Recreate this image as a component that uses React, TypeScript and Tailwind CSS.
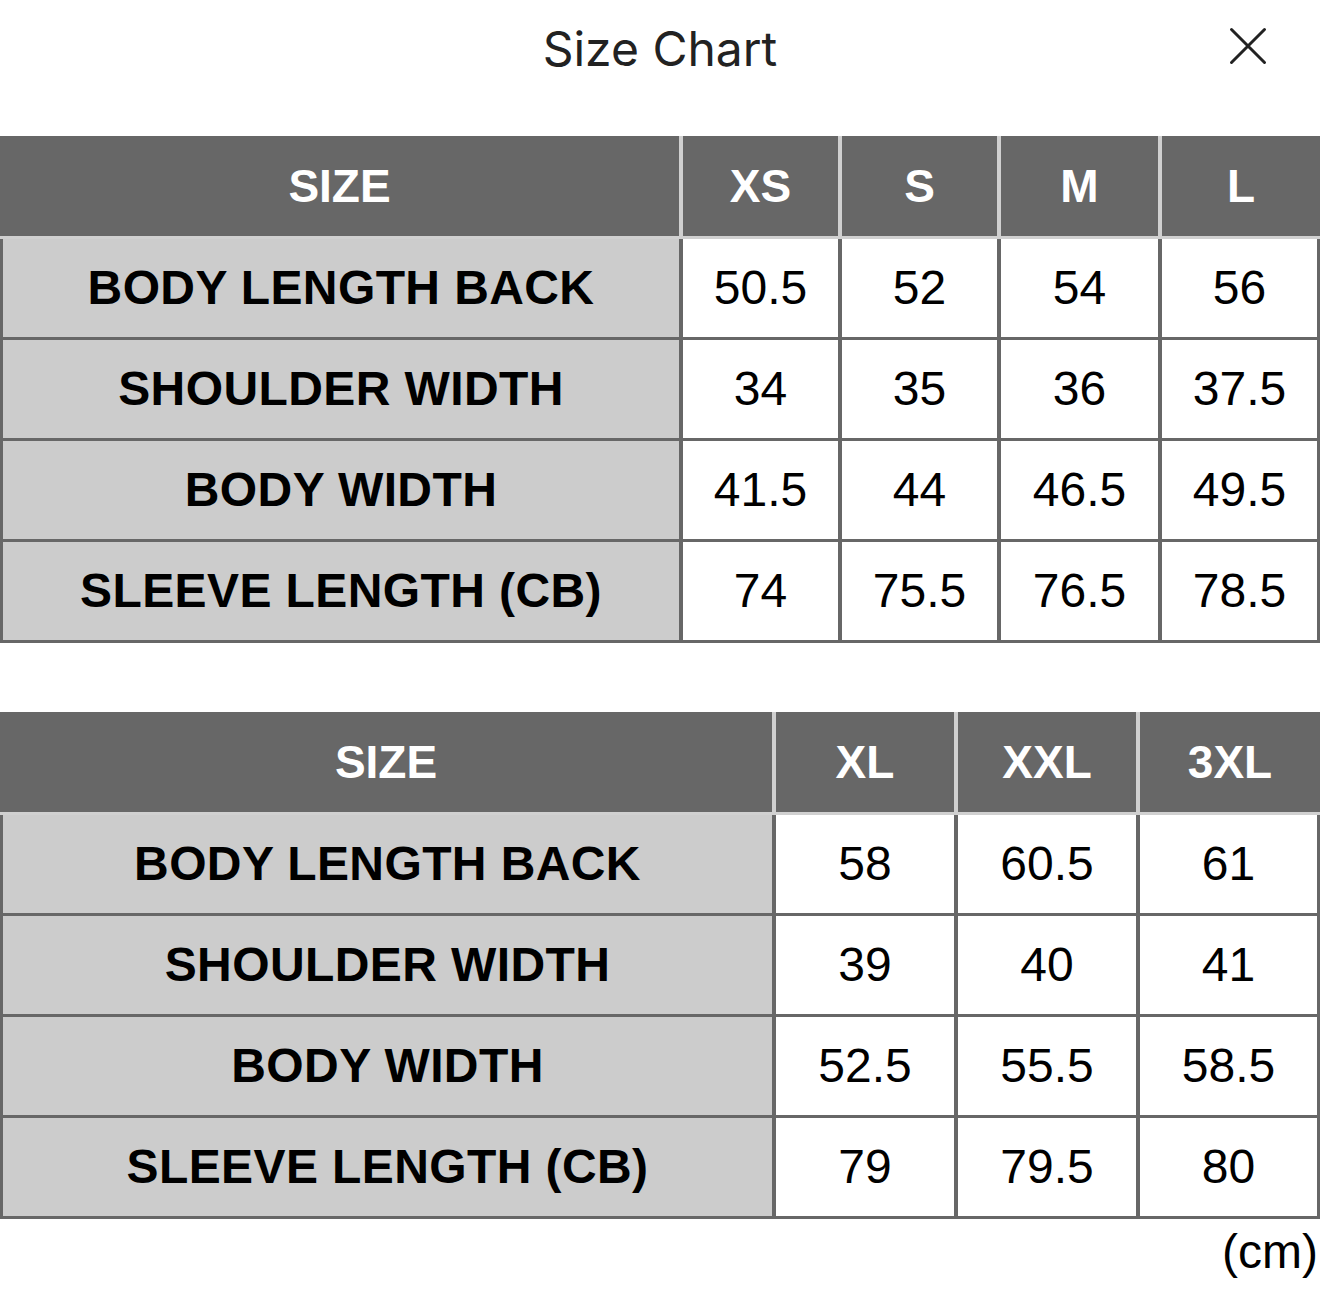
import * as React from "react";

interface SizeTable {
  sizes: string[];
  headGrid: string;
  bodyGrid: string;
  rows: { label: string; values: string[] }[];
}

const TABLES: SizeTable[] = [
  {
    sizes: ["XS", "S", "M", "L"],
    headGrid: "grid-cols-[679px_155px_155px_157px_158px]",
    bodyGrid: "grid-cols-[676px_155px_155px_157px_155px]",
    rows: [
      { label: "BODY LENGTH BACK", values: ["50.5", "52", "54", "56"] },
      { label: "SHOULDER WIDTH", values: ["34", "35", "36", "37.5"] },
      { label: "BODY WIDTH", values: ["41.5", "44", "46.5", "49.5"] },
      { label: "SLEEVE LENGTH (CB)", values: ["74", "75.5", "76.5", "78.5"] },
    ],
  },
  {
    sizes: ["XL", "XXL", "3XL"],
    headGrid: "grid-cols-[772px_178px_178px_180px]",
    bodyGrid: "grid-cols-[769px_178px_178px_177px]",
    rows: [
      { label: "BODY LENGTH BACK", values: ["58", "60.5", "61"] },
      { label: "SHOULDER WIDTH", values: ["39", "40", "41"] },
      { label: "BODY WIDTH", values: ["52.5", "55.5", "58.5"] },
      { label: "SLEEVE LENGTH (CB)", values: ["79", "79.5", "80"] },
    ],
  },
];

const ChartTable = ({ table }: { table: SizeTable }) => (
  <div className="font-['Liberation_Sans',Arial,sans-serif]">
    {/* Header */}
    <div className={`grid ${table.headGrid} gap-x-[4px] bg-[#d0d0d0] pb-[3px]`}>
      {["SIZE", ...table.sizes].map((s) => (
        <div
          key={s}
          className="h-[100px] bg-[#676767] flex items-center justify-center text-white font-bold text-[46px] leading-none"
        >
          {s}
        </div>
      ))}
    </div>

    {/* Body */}
    <div
      className={`grid ${table.bodyGrid} auto-rows-[98px] gap-x-[4px] gap-y-[3px] bg-[#676767] px-[3px] pb-[3px]`}
    >
      {table.rows.map((row) => (
        <React.Fragment key={row.label}>
          <div className="bg-[#cccccc] flex items-center justify-center text-black font-bold text-[48px] leading-none tracking-[0.4px] whitespace-nowrap">
            {row.label}
          </div>
          {row.values.map((v, i) => (
            <div
              key={i}
              className="bg-white flex items-center justify-center text-black text-[48px] leading-none"
            >
              {v}
            </div>
          ))}
        </React.Fragment>
      ))}
    </div>
  </div>
);

export default function App() {
  return (
    <div className="w-[1320px] bg-white pb-[20px]">
      {/* Title bar */}
      <div className="grid grid-cols-[1fr_auto_1fr] h-[136px]">
        <div />
        <h1 className="pt-[20px] text-[48px] leading-[58px] text-[#222] font-['Inter','Noto_Sans',sans-serif]">
          Size Chart
        </h1>
        <div className="flex justify-end pr-[52px] pt-[26px]">
          <button className="w-[40px] h-[40px]" aria-label="Close">
            <svg width="40" height="40" viewBox="0 0 40 40" fill="none">
              <path
                d="M3.5 3.5L36.5 36.5M36.5 3.5L3.5 36.5"
                stroke="#222"
                strokeWidth="3"
                strokeLinecap="round"
              />
            </svg>
          </button>
        </div>
      </div>

      <div className="flex flex-col gap-[69px]">
        {TABLES.map((t) => (
          <ChartTable key={t.sizes[0]} table={t} />
        ))}
      </div>

      <div className="mt-[9px] pr-[2px] text-right text-[48px] leading-none text-black font-['Liberation_Sans',Arial,sans-serif]">
        (cm)
      </div>
    </div>
  );
}
